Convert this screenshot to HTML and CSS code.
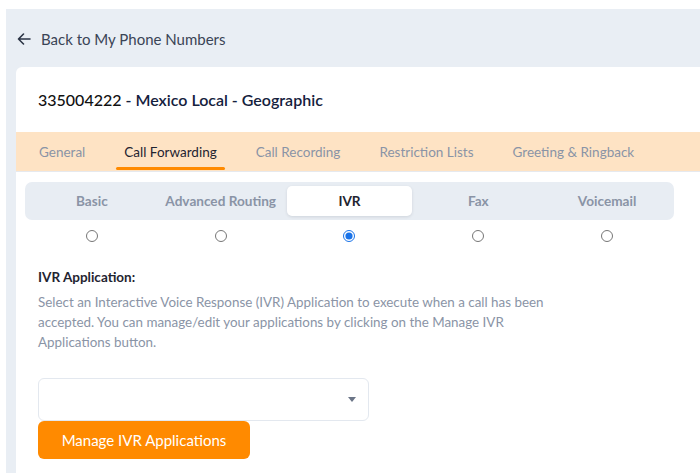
FILE: index.html
```html
<!DOCTYPE html>
<html lang="en">
<head>
<meta charset="utf-8">
<title>Phone Number - IVR</title>
<link rel="stylesheet" href="styles.css">
</head>
<body>
<div class="page">
  <header class="back-row">
    <a class="back-link" href="#">
      <svg class="back-icon" width="14" height="12" viewBox="0 0 14 12" aria-hidden="true">
        <path d="M13 6H1.5M6.5 1L1.5 6l5 5" fill="none" stroke="#2b3445" stroke-width="1.6" stroke-linecap="round" stroke-linejoin="round"/>
      </svg>
      <span>Back to My Phone Numbers</span>
    </a>
  </header>
  <main class="card">
    <h1 class="title"><span class="num">335004222</span> <span class="desc">- Mexico Local - Geographic</span></h1>
    <nav class="tabs">
      <a class="tab" href="#">General</a>
      <a class="tab active" href="#">Call Forwarding</a>
      <a class="tab" href="#">Call Recording</a>
      <a class="tab" href="#">Restriction Lists</a>
      <a class="tab" href="#">Greeting &amp; Ringback</a>
    </nav>
    <section class="content">
      <div class="segmented">
        <div class="seg">Basic</div>
        <div class="seg">Advanced Routing</div>
        <div class="seg active">IVR</div>
        <div class="seg">Fax</div>
        <div class="seg">Voicemail</div>
      </div>
      <div class="radios">
        <label class="radio-cell"><input type="radio" name="mode"></label>
        <label class="radio-cell"><input type="radio" name="mode"></label>
        <label class="radio-cell"><input type="radio" name="mode" checked></label>
        <label class="radio-cell"><input type="radio" name="mode"></label>
        <label class="radio-cell"><input type="radio" name="mode"></label>
      </div>
      <div class="form">
        <h2 class="label">IVR Application:</h2>
        <p class="help">Select an Interactive Voice Response (IVR) Application to execute when a call has been accepted. You can manage/edit your applications by clicking on the Manage IVR Applications button.</p>
        <div class="select">
          <span class="caret"></span>
        </div>
        <button class="btn" type="button">Manage IVR Applications</button>
      </div>
    </section>
  </main>
</div>
</body>
</html>
```
FILE: styles.css
```css
* { box-sizing: border-box; }
html, body { margin: 0; padding: 0; }
body {
  background: #ffffff;
  padding: 9px 0 0 6px;
  font-family: Lato, "Open Sans", "Liberation Sans", sans-serif;
  overflow: hidden;
  height: 473px;
}
.page {
  background: #e9eef4;
  padding-left: 10px;
  height: 100%;
}
.back-row {
  height: 58px;
  display: flex;
  align-items: center;
  padding-top: 1px;
}
.back-link {
  display: flex;
  align-items: center;
  gap: 10px;
  color: #3a4456;
  text-decoration: none;
  font-size: 15px;
  margin-left: 1px;
}
.back-icon { display: block; }
.card {
  background: #ffffff;
  border-radius: 6px 0 0 0;
  height: 420px;
}
.title {
  margin: 0;
  height: 65px;
  display: flex;
  align-items: center;
  gap: 4px;
  padding-left: 22px;
  font-size: 16px;
  color: #111827;
  font-weight: 600;
}
.title .num { font-weight: 500; color: #111; }
.title .desc { color: #14213d; }
.tabs {
  background: #fee3c4;
  height: 40px;
  border-bottom: 1px solid #e6e9ee;
  display: flex;
  align-items: stretch;
  padding-left: 15px;
  gap: 23px;
}
.tab {
  position: relative;
  display: flex;
  align-items: center;
  padding: 0 8px;
  font-size: 13.5px;
  color: #8a94a6;
  text-decoration: none;
}
.tab.active { color: #1f2430; }
.tab.active::after {
  content: "";
  position: absolute;
  left: 0;
  right: 0;
  bottom: 1px;
  height: 3px;
  border-radius: 2px;
  background: #ff8a00;
}
.content { padding: 10px 26px 0 9px; }
.segmented {
  background: #e8edf3;
  border-radius: 7px;
  height: 38px;
  padding: 4px;
  display: flex;
  gap: 3px;
}
.seg {
  flex: 1;
  display: flex;
  align-items: center;
  justify-content: center;
  font-size: 13.6px;
  font-weight: 700;
  color: #8a94a6;
  border-radius: 5px;
}
.seg.active {
  background: #ffffff;
  color: #1f2430;
  box-shadow: 0 1px 3px rgba(30, 41, 59, 0.12);
}
.radios {
  display: flex;
  gap: 3px;
  padding: 0 4px;
  height: 32px;
  align-items: center;
}
.radio-cell {
  flex: 1;
  display: flex;
  justify-content: center;
}
.radio-cell input {
  margin: 0;
  width: 12px;
  height: 12px;
  accent-color: #1a73e8;
}
.form { padding-left: 13px; padding-top: 16px; }
.label {
  margin: 0;
  font-size: 13.5px;
  font-weight: 700;
  color: #1f2430;
  line-height: 18px;
}
.help {
  margin: 6px 0 0;
  width: 540px;
  font-size: 13.4px;
  line-height: 20px;
  color: #8a94a6;
}
.select {
  margin-top: 26px;
  width: 331px;
  height: 43px;
  border: 1px solid #e3e8ef;
  border-radius: 6px;
  display: flex;
  align-items: center;
  justify-content: flex-end;
  padding-right: 12px;
}
.caret {
  width: 0;
  height: 0;
  border-left: 4px solid transparent;
  border-right: 4px solid transparent;
  border-top: 5px solid #6b7587;
}
.btn {
  display: block;
  width: 212px;
  height: 38px;
  border: 0;
  border-radius: 6px;
  background: #ff8a00;
  color: #ffffff;
  font-family: inherit;
  font-size: 15px;
  cursor: pointer;
}
```
